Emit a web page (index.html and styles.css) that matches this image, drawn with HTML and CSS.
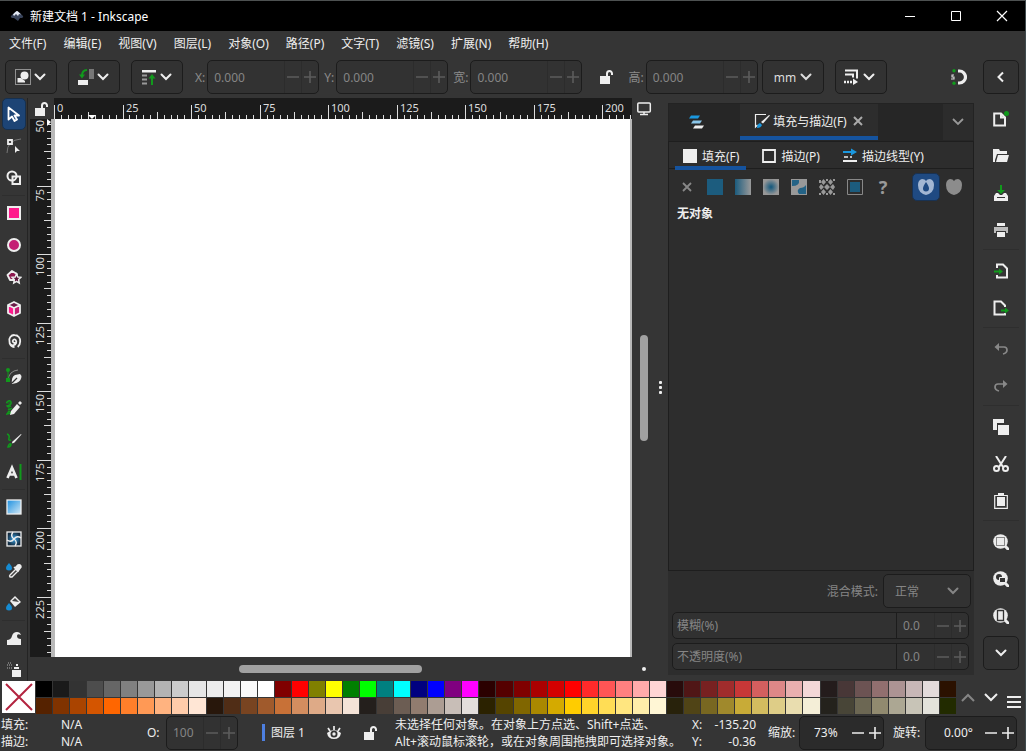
FILE: index.html
```html
<!DOCTYPE html>
<html lang="zh-CN">
<head>
    <meta charset="UTF-8">
    <title>新建文档 1 - Inkscape</title>
    <link rel="stylesheet" href="styles.css">
</head>
<body>

<!-- 公用图标 -->
<svg class="defs" aria-hidden="true">
    <symbol id="down" viewBox="0 0 12 12"><path d="M1.500 3.500L6 8l4.500-4.500" fill="none" stroke="currentColor" stroke-width="2" stroke-linecap="round"/></symbol>
    <symbol id="minus" viewBox="0 0 12 12"><path d="M0 6h12" stroke="currentColor" stroke-width="1.6"/></symbol>
    <symbol id="plus" viewBox="0 0 12 12"><path d="M0 6h12M6 0v12" stroke="currentColor" stroke-width="1.6"/></symbol>
    <symbol id="lock" viewBox="0 0 16 16"><path d="M1 7h10v8H1z" fill="currentColor"/><path d="M8 8V4.500a2.500 2.500 0 0 1 5 0V6" fill="none" stroke="currentColor" stroke-width="2"/></symbol>
    <symbol id="lens" viewBox="0 0 16 16"><circle cx="7.500" cy="7.500" r="7.300" fill="#ececec"/><path d="M12 12l3 3" stroke="#ececec" stroke-width="3" stroke-linecap="round"/></symbol>
</svg>

<div class="window">
    <header class="titlebar">
        <svg class="logo" viewBox="0 0 14 12"><path d="M1 6Q6 1 7 1t6 5q1 2-3 2L8 11 4 8Q0 8 1 6z" fill="#38435a"/><path d="M3 4.500Q6 1 7 1t4 3.500L9 4 8 6 6 4 4 6z" fill="#e4eaf5"/></svg>
        <span class="title">新建文档 1 - Inkscape</span>
        <button class="win-btn" aria-label="最小化"><svg viewBox="0 0 12 12"><path d="M1 6.500h10" stroke="#fff"/></svg></button>
        <button class="win-btn" aria-label="最大化"><svg viewBox="0 0 12 12"><path d="M1.500 1.500h9v9h-9z" stroke="#fff" fill="none"/></svg></button>
        <button class="win-btn" aria-label="关闭"><svg viewBox="0 0 12 12"><path d="M1 1l10 10M11 1L1 11" stroke="#fff" stroke-width="1.200"/></svg></button>
    </header>

    <nav class="menubar">
        <button>文件(F)</button>
        <button>编辑(E)</button>
        <button>视图(V)</button>
        <button>图层(L)</button>
        <button>对象(O)</button>
        <button>路径(P)</button>
        <button>文字(T)</button>
        <button>滤镜(S)</button>
        <button>扩展(N)</button>
        <button>帮助(H)</button>
    </nav>

    <div class="toolbar">
        <button class="drop" aria-label="选择">
            <svg class="icon" viewBox="0 0 16 16"><path d="M.5.500h15v15H.500z" fill="none" stroke="#eee" stroke-dasharray="1 1"/><circle cx="9.500" cy="6.500" r="4" fill="#eee"/><path d="M2.500 9H6l4 3v1.500H2.500z" fill="#eee"/></svg>
            <svg class="arrow"><use href="#down"/></svg>
        </button>
        <button class="drop" aria-label="旋转对象">
            <svg class="icon" viewBox="0 0 16 16"><path d="M11 0h5v10h-5z" fill="#777"/><path d="M0 11h10v5H0z" fill="#eee"/><path d="M9 1Q4 1 4 7" fill="none" stroke="#119a1c" stroke-width="2"/><path d="M1 5.500h6L4 9.500z" fill="#119a1c"/></svg>
            <svg class="arrow"><use href="#down"/></svg>
        </button>
        <button class="drop" aria-label="层叠次序">
            <svg class="icon" viewBox="0 0 16 16"><path d="M1 1h14v2.500H1z" fill="#eee"/><path d="M1 6.500h5M1 10.500h5M1 14.500h5" stroke="#999" stroke-width="2"/><path d="M11 16V8" stroke="#119a1c" stroke-width="2"/><path d="M7.500 9.500L11 5l3.500 4.500z" fill="#119a1c"/></svg>
            <svg class="arrow"><use href="#down"/></svg>
        </button>

        <div class="fields">
            <label for="pos-x">X:</label>
            <span class="spin off"><input id="pos-x" type="text" value="0.000" disabled><button aria-label="减" disabled><svg><use href="#minus"/></svg></button><button aria-label="加" disabled><svg><use href="#plus"/></svg></button></span>
            <label for="pos-y">Y:</label>
            <span class="spin off"><input id="pos-y" type="text" value="0.000" disabled><button aria-label="减" disabled><svg><use href="#minus"/></svg></button><button aria-label="加" disabled><svg><use href="#plus"/></svg></button></span>
            <label for="size-w">宽:</label>
            <span class="spin off"><input id="size-w" type="text" value="0.000" disabled><button aria-label="减" disabled><svg><use href="#minus"/></svg></button><button aria-label="加" disabled><svg><use href="#plus"/></svg></button></span>
            <button class="lock-ratio" aria-label="锁定宽高比"><svg class="icon"><use href="#lock"/></svg></button>
            <label for="size-h">高:</label>
            <span class="spin off"><input id="size-h" type="text" value="0.000" disabled><button aria-label="减" disabled><svg><use href="#minus"/></svg></button><button aria-label="加" disabled><svg><use href="#plus"/></svg></button></span>
            <span class="select unit">
                <select aria-label="单位"><option>mm</option><option>px</option></select>
                <svg class="arrow"><use href="#down"/></svg>
            </span>
        </div>

        <button class="drop" aria-label="变换选项">
            <svg class="icon" viewBox="0 0 16 16"><path d="M1 1.500h12v8M1 5.500h8v3" fill="none" stroke="#eee" stroke-width="2"/><path d="M0 13h9" stroke="#eee" stroke-width="2.500" stroke-dasharray="2 1"/><path d="M9 9.500l5 3.500-5 3z" fill="#eee"/></svg>
            <svg class="arrow"><use href="#down"/></svg>
        </button>

        <button class="plain snap" aria-label="吸附">
            <svg class="icon" viewBox="0 0 16 16"><path d="M7 2h1.500a6 6 0 0 1 0 12H7" fill="none" stroke="#eee" stroke-width="3.200"/><circle cx="3" cy="1.800" r="1.700" fill="#119a1c"/><circle cx="3" cy="14.200" r="1.700" fill="#119a1c"/><path d="M3 6H1v2h2v2H0" fill="none" stroke="#ddd" stroke-width="1.100"/></svg>
        </button>
        <button class="more" aria-label="展开"><svg class="arrow" viewBox="0 0 12 12"><path d="M8 1.500L3.500 6 8 10.500" fill="none" stroke="#eee" stroke-width="2"/></svg></button>
    </div>

    <main class="body">
        <aside class="toolbox">
            <button class="active" aria-label="选择工具"><svg class="icon" viewBox="0 0 16 16"><path d="M2.500 1.500v12l3.500-3 2.500 4.500 2.500-1.500-2.500-4H13z" fill="#1d4475" stroke="#fff" stroke-width="1.800" stroke-linejoin="round"/></svg></button>
            <button aria-label="节点工具"><svg class="icon" viewBox="0 0 16 16"><path d="M1 15Q1 2 15 1" fill="none" stroke="#777"/><path d="M2 2h4v4H2z" fill="#444" stroke="#eee" stroke-width="1.800"/><path d="M9 8v7l2-2h3z" fill="#eee"/></svg></button>
            <button aria-label="形状生成"><svg class="icon" viewBox="0 0 16 16"><circle cx="6" cy="6" r="4.500" fill="none" stroke="#eee" stroke-width="2"/><path d="M6.500 6.500h7.500v7.500H6.500z" fill="none" stroke="#eee" stroke-width="2"/></svg></button>
            <hr>
            <button aria-label="矩形"><svg class="icon" viewBox="0 0 16 16"><rect x="2" y="2" width="12" height="12" fill="#ff1a8c" stroke="#eee" stroke-width="2"/></svg></button>
            <button aria-label="椭圆"><svg class="icon" viewBox="0 0 16 16"><circle cx="8" cy="8" r="6" fill="#c41d74" stroke="#eee" stroke-width="2"/></svg></button>
            <button aria-label="星形"><svg class="icon" viewBox="0 0 16 16"><path d="M6 2l5 3-1 6H4L1.500 6z" fill="#8e174e" stroke="#eee" stroke-width="1.800" stroke-linejoin="round"/><path d="M10.500 5l1.300 3 3.200.300-2.400 2.200.700 3.500-2.800-1.700L7.700 14l.700-3.500L6 8.300 9.200 8z" fill="#5b1539" stroke="#eee" stroke-width="1.400"/></svg></button>
            <button aria-label="立方体"><svg class="icon" viewBox="0 0 16 16"><path d="M8 1l6 3v8l-6 3-6-3V4z" fill="#6b1b47"/><path d="M2 4l6 3v8l-6-3z" fill="#ff1a8c"/><path d="M8 7l6-3v8l-6 3z" fill="#c41d74"/><path d="M8 1l6 3v8l-6 3-6-3V4zM2 4l6 3 6-3M8 7v8" fill="none" stroke="#eee" stroke-width="1.800" stroke-linejoin="round"/></svg></button>
            <button aria-label="螺旋"><svg class="icon" viewBox="0 0 16 16"><path d="M9.500 9.500A1.700 1.700 0 1 1 9.700 7a3.400 3.400 0 1 1-6.200 1.500A5 5 0 0 1 8.500 2a5.800 5.800 0 0 1 5.700 6.500q0 3.500-2.500 5.500M4 11q1.500 3 4.500 3" fill="none" stroke="#eee" stroke-width="1.800"/></svg></button>
            <hr>
            <button aria-label="钢笔"><svg class="icon" viewBox="0 0 16 16"><path d="M2 12Q3 3 12 2" stroke="#888" fill="none"/><circle cx="2" cy="2" r="2" fill="#119a1c"/><path d="M0 10h4v4H0zM1.500 2h1v10h-1z" fill="#119a1c"/><path d="M6 16q-1-7 3-9l5-1 1.500 2q0 5-5 7z" fill="#eee"/><path d="M6 15l5-5" stroke="#333" stroke-width="1.300"/></svg></button>
            <button aria-label="铅笔"><svg class="icon" viewBox="0 0 16 16"><path d="M0 3q4-4 5-1T1 6q1 2 4 0M2 9q2 1 4-1M1 14l2-3 2 2z" stroke="#119a1c" stroke-width="1.400" fill="#119a1c" fill-opacity=".4"/><path d="M5 11l6-7 3 3-6 7-4 1z" fill="#eee"/><path d="M12 3l2-2 2 2-2 2z" fill="#eee"/></svg></button>
            <button aria-label="书法"><svg class="icon" viewBox="0 0 16 16"><path d="M1 2q3 1 2 4t2 2M2 15q1-4 3-3 0 3-3 3z" fill="none" stroke="#119a1c" stroke-width="1.500"/><path d="M6 10l9-8 .5.500-7 8-2 1z" fill="#eee"/></svg></button>
            <button aria-label="文本"><svg class="icon" viewBox="0 0 16 16"><path d="M1.500 14L6 3.500 10.500 14M3 10.500h6" fill="none" stroke="#eee" stroke-width="2.600"/><path d="M14.500 0v16" stroke="#119a1c" stroke-width="2"/></svg></button>
            <hr>
            <button aria-label="渐变"><svg class="icon" viewBox="0 0 16 16"><defs><linearGradient id="sky" x2="1" y2="1"><stop stop-color="#1a8fe0"/><stop offset="1" stop-color="#d4e9f5"/></linearGradient></defs><rect x="1" y="1" width="14" height="14" fill="url(#sky)" stroke="#eee" stroke-width="1.300"/></svg></button>
            <button aria-label="网格渐变"><svg class="icon" viewBox="0 0 16 16"><defs><radialGradient id="mesh"><stop stop-color="#3aa5e8"/><stop offset="1" stop-color="#152c40"/></radialGradient></defs><rect x="1" y="1" width="14" height="14" fill="url(#mesh)" stroke="#eee" stroke-width="1.300"/><path d="M8 8Q4 5 7 1M8 8q3-4 7-1M8 8q4 3 1 7M8 8q-3 4-7 1" fill="none" stroke="#eee" stroke-width="1.400"/></svg></button>
            <button aria-label="取色器"><svg class="icon" viewBox="0 0 16 16"><path d="M3 0q3 3 3 5a3 2.500 0 0 1-6 0q0-2 3-5z" fill="#168bd2"/><path d="M4 14q-1-1 0-2l6-6 2 2-6 6z" fill="#444" stroke="#eee" stroke-width="1.300"/><path d="M8 4l4 4M9 5l3-3q3-1 3 2l-3 4z" fill="#eee" stroke="#eee" stroke-width="1.500"/></svg></button>
            <button aria-label="油漆桶"><svg class="icon" viewBox="0 0 16 16"><path d="M4 6l5-5 6 6-6 5z" fill="#eee"/><path d="M6 6l3-3 4 4z" fill="#444"/><path d="M3 8q3 3 3 5a3 2.500 0 0 1-6 0q0-2 3-5z" fill="#168bd2"/></svg></button>
            <hr>
            <button aria-label="微调"><svg class="icon" viewBox="0 0 16 16"><path d="M1 15v-5q4 0 5-4 1-4 5-4 3 0 4 3-4-2-4 1 0 3 4 3v6z" fill="#eee"/></svg></button>
            <button aria-label="喷绘"><svg class="icon" viewBox="0 0 16 16"><path d="M1 3h6M1 6h5M2 1h3" stroke="#888" stroke-width="1.500" stroke-dasharray="1 1"/><path d="M6 8h9v7H6zM8 5h5v2H8zM10 2h2v2h-2z" fill="#eee"/></svg></button>
        </aside>

        <section class="canvas-area">
            <div class="ruler-row">
                <button class="corner" aria-label="锁定参考线"><svg class="icon"><use href="#lock"/></svg></button>
                <svg class="ruler-h" id="rulerH"></svg>
                <button class="side" aria-label="显示模式"><svg class="icon" viewBox="0 0 16 16"><rect x="1.800" y="2" width="12.500" height="9" rx="1" fill="none" stroke="#eee" stroke-width="1.500"/><path d="M4 13.500h8M8 11v3" stroke="#eee" stroke-width="1.500"/></svg></button>
            </div>
            <div class="view-row">
                <svg class="ruler-v" id="rulerV"></svg>
                <div class="desk"><div class="page"></div></div>
                <div class="scroll-v"><div class="thumb-v"></div></div>
            </div>
            <div class="scroll-row">
                <div class="scroll-h"><div class="thumb-h"></div></div>
                <div class="side"><span class="dot"></span></div>
            </div>
        </section>

        <div class="splitter"><span></span><span></span><span></span></div>

        <section class="dock">
            <div class="dock-tabs">
                <button class="dock-tab" aria-label="图层和对象"><svg class="icon" viewBox="0 0 16 16"><path d="M3 1.500h9l-2 3H1z" fill="#1a98df"/><path d="M5 6.500h9l-2 3H3z" fill="#8bc7ea"/><path d="M7 11.500h9l-2 3H5z" fill="#eee"/></svg></button>
                <button class="dock-tab current"><svg class="icon" viewBox="0 0 16 16"><path d="M12 1.500H1.500v12.500l2-2" fill="none" stroke="#eee" stroke-width="1.200"/><path d="M7 9l8-7 1 .5-7 8z" fill="#eee"/><path d="M3 15q0-4 3-5l2 2q-1 3-5 3z" fill="#1a98df"/></svg><span>填充与描边(F)</span><svg class="close" viewBox="0 0 12 12"><path d="M2 2l8 8M10 2l-8 8" stroke="#aaa" stroke-width="2"/></svg></button>
                <button class="dock-menu" aria-label="对话框菜单"><svg viewBox="0 0 14 14"><path d="M2 4l5 5 5-5" fill="none" stroke="#999" stroke-width="1.800"/></svg></button>
            </div>
            <div class="dialog">
                <div class="subtabs">
                    <button class="current"><svg class="icon" viewBox="0 0 16 16"><path d="M1 1h14v14H1z" fill="#eee"/></svg>填充(F)</button>
                    <button><svg class="icon" viewBox="0 0 16 16"><path d="M2 2h12v12H2z" fill="none" stroke="#eee" stroke-width="1.800"/></svg>描边(P)</button>
                    <button><svg class="icon" viewBox="0 0 16 16"><path d="M1 4h9" stroke="#1a98df" stroke-width="2"/><path d="M9 .5l6 3.500-6 3.500z" fill="#1a98df"/><path d="M2 9h4M8 9h2" stroke="#eee" stroke-width="1.500"/><path d="M1 13h14" stroke="#eee" stroke-width="2"/></svg>描边线型(Y)</button>
                </div>
                <div class="paints">
                    <button aria-label="无填充"><svg class="icon" viewBox="0 0 16 16"><path d="M4 4l8 8M12 4l-8 8" stroke="#888" stroke-width="1.800"/></svg></button>
                    <button aria-label="均匀颜色"><svg class="icon" viewBox="0 0 16 16"><path d="M0 0h16v16H0z" fill="#1c5c7e"/></svg></button>
                    <button aria-label="线性渐变"><svg class="icon" viewBox="0 0 16 16"><defs><linearGradient id="lin"><stop stop-color="#1c5c7e"/><stop offset="1" stop-color="#9a9a9a"/></linearGradient></defs><path d="M0 0h16v16H0z" fill="url(#lin)"/></svg></button>
                    <button aria-label="径向渐变"><svg class="icon" viewBox="0 0 16 16"><defs><radialGradient id="rad"><stop offset=".1" stop-color="#1c5c7e"/><stop offset="1" stop-color="#979797"/></radialGradient></defs><path d="M0 0h16v16H0z" fill="url(#rad)"/></svg></button>
                    <button aria-label="网格"><svg class="icon" viewBox="0 0 16 16"><path d="M0 0h16v16H0z" fill="#999"/><path d="M1 1h7q1 6-7 6z" fill="#246386"/><path d="M15 15H8q-3-4 1-6 4 0 6-3z" fill="#246386"/></svg></button>
                    <button aria-label="图案"><svg class="icon" viewBox="0 0 16 16"><path d="M0 1h2v3H0zM4.500 0l2.500 3-2.500 3L2 3zM11.500 0L14 3l-2.500 3L9 3zM2 5l3 3-3 3-2-3zM8 5l3 3-3 3-3-3zM14 5l2 3-2 3-3-3zM4.500 10L7 13l-2.500 3L2 13zM11.500 10l2.500 3-2.500 3L9 13zM7 0h2v2H7zM14 0h2v2h-2zM7 14h2v2H7zM14 14h2v2h-2zM0 14h2v2H0z" fill="#999"/></svg></button>
                    <button aria-label="色板"><svg class="icon" viewBox="0 0 16 16"><path d="M.500.500h15v15H.500z" fill="none" stroke="#888"/><path d="M3 3h10v10H3z" fill="#1c5c7e"/></svg></button>
                    <button class="unknown" aria-label="未定义">?</button>
                    <button class="rule on" aria-label="奇偶填充"><svg class="icon" viewBox="0 0 16 16"><path fill-rule="evenodd" d="M4 0q3 0 4 2 1-2 4-2 4 1 4 6 0 8-8 10Q0 14 0 6q0-5 4-6zM8 3Q5 7 5 9.500a3 3 0 0 0 6 0Q11 7 8 3z" fill="#a3b7d3"/></svg></button>
                    <button class="rule" aria-label="非零填充"><svg class="icon" viewBox="0 0 16 16"><path d="M4 0q3 0 4 2 1-2 4-2 4 1 4 6 0 8-8 10Q0 14 0 6q0-5 4-6z" fill="#8c8c8c"/></svg></button>
                </div>
                <p class="empty">无对象</p>
            </div>
            <div class="object-props">
                <div class="blend">
                    <label for="blend">混合模式:</label>
                    <span class="select">
                        <select id="blend" disabled><option>正常</option></select>
                        <svg class="arrow"><use href="#down"/></svg>
                    </span>
                </div>
                <div class="spin off slider"><label for="blur">模糊(%)</label><input id="blur" type="text" value="0.0" disabled><button aria-label="减" disabled><svg><use href="#minus"/></svg></button><button aria-label="加" disabled><svg><use href="#plus"/></svg></button></div>
                <div class="spin off slider"><label for="opacity">不透明度(%)</label><input id="opacity" type="text" value="0.0" disabled><button aria-label="减" disabled><svg><use href="#minus"/></svg></button><button aria-label="加" disabled><svg><use href="#plus"/></svg></button></div>
            </div>
        </section>

        <aside class="commands">
            <button aria-label="新建"><svg class="icon" viewBox="0 0 16 16"><path d="M1.200 2.500H8l4 4v8H1.200zM8 2.500v4h4" fill="none" stroke="#eee" stroke-width="2"/><circle cx="13.500" cy="2.500" r="2.500" fill="#119a1c"/></svg></button>
            <button aria-label="打开"><svg class="icon" viewBox="0 0 16 16"><path d="M0 1h6l1 2h7v3H4l-2 6v2H0z" fill="#eee"/><path d="M5 7h11l-2 7H3z" fill="#eee"/></svg></button>
            <button aria-label="保存"><svg class="icon" viewBox="0 0 16 16"><path d="M8 0v6" stroke="#119a1c" stroke-width="2"/><path d="M4 5h8L8 9z" fill="#119a1c"/><path d="M3 8h2l2 2h2l2-2h2l2 3v5H1v-5z" fill="#eee"/><path d="M4 12.500h8" stroke="#333"/></svg></button>
            <button aria-label="打印"><svg class="icon" viewBox="0 0 16 16"><path d="M4 1h8v3H4z" fill="#eee"/><path d="M1 5h14v6h-2V9H3v2H1z" fill="#bbb"/><path d="M4 10h8v5H4z" fill="#eee"/></svg></button>
            <hr>
            <button aria-label="导入"><svg class="icon" viewBox="0 0 16 16"><path d="M4 5V1.500h6l4 4v9H4V12" fill="none" stroke="#eee" stroke-width="2"/><path d="M1 8.500h6" stroke="#119a1c" stroke-width="2"/><path d="M6 5.500l4 3-4 3z" fill="#119a1c"/></svg></button>
            <button aria-label="导出"><svg class="icon" viewBox="0 0 16 16"><path d="M12 7V5.500l-4-4H1.500v13H12V13" fill="none" stroke="#eee" stroke-width="2"/><path d="M8 10.500h5" stroke="#119a1c" stroke-width="2"/><path d="M12 7.500l4 3-4 3z" fill="#119a1c"/></svg></button>
            <hr>
            <button aria-label="撤销"><svg class="icon" viewBox="0 0 16 16"><path d="M3 6h8q3 0 3 3t-4 4" fill="none" stroke="#888" stroke-width="1.700"/><path d="M6 2L1.500 6 6 10" fill="#888"/></svg></button>
            <button aria-label="重做"><svg class="icon" viewBox="0 0 16 16"><path d="M13 6H5Q2 6 2 9t4 4" fill="none" stroke="#888" stroke-width="1.700"/><path d="M10 2l4.500 4-4.500 4" fill="#888"/></svg></button>
            <hr>
            <button aria-label="复制"><svg class="icon" viewBox="0 0 16 16"><path d="M0 0h11v4H4v7H0zM5 6h11v10H5z" fill="#eee"/></svg></button>
            <button aria-label="剪切"><svg class="icon" viewBox="0 0 16 16"><path d="M3 0l7 11M13 0L6 11" stroke="#eee" stroke-width="2"/><circle cx="3.500" cy="12.500" r="2.500" fill="none" stroke="#eee" stroke-width="2"/><circle cx="12.500" cy="12.500" r="2.500" fill="none" stroke="#eee" stroke-width="2"/></svg></button>
            <button aria-label="粘贴"><svg class="icon" viewBox="0 0 16 16"><path d="M1.700 2.500h12.600v12.800H1.700z" fill="none" stroke="#eee" stroke-width="1.200"/><path d="M4 4h8v9H4zM5 0h6v3H5z" fill="#eee"/></svg></button>
            <hr>
            <button aria-label="缩放到选区"><svg class="icon" viewBox="0 0 16 16"><use href="#lens"/><path d="M3.500 3.500h8v8h-8z" fill="none" stroke="#222" stroke-dasharray="1 1"/></svg></button>
            <button aria-label="缩放到绘图"><svg class="icon" viewBox="0 0 16 16"><use href="#lens"/><circle cx="6" cy="6" r="3" fill="#333"/><path d="M6.500 6.500h6v5h-6z" fill="#333" stroke="#eee"/></svg></button>
            <button aria-label="缩放到页面"><svg class="icon" viewBox="0 0 16 16"><use href="#lens"/><path d="M4.500 2.500h6v10h-6z" fill="none" stroke="#333" stroke-width="1.300"/></svg></button>
            <button class="more" aria-label="更多"><svg class="arrow"><use href="#down"/></svg></button>
        </aside>
    </main>

    <div class="palette">
        <button class="none" aria-label="无颜色"><svg viewBox="0 0 32 32"><path d="M3 3l26 26M29 3L3 29" stroke="#b3243f" stroke-width="2"/></svg></button>
        <div class="swatches" id="swatches"></div>
        <div class="palette-nav">
            <button class="dim" aria-label="上一行"><svg viewBox="0 0 14 14"><path d="M1 10l6-6 6 6" fill="none" stroke="currentColor" stroke-width="2"/></svg></button>
            <button aria-label="下一行"><svg viewBox="0 0 14 14"><path d="M1 3l6 6 6-6" fill="none" stroke="currentColor" stroke-width="2"/></svg></button>
            <button class="burger" aria-label="调色板菜单"><svg viewBox="0 0 14 14"><path d="M0 2h14M0 7h14M0 12h14" stroke="currentColor" stroke-width="2"/></svg></button>
        </div>
    </div>

    <footer class="status">
        <dl class="style-info">
            <dt>填充:</dt><dd>N/A</dd>
            <dt>描边:</dt><dd>N/A</dd>
        </dl>
        <div class="group opacity">
            <label for="master-opacity">O:</label>
            <span class="spin off"><input id="master-opacity" type="text" value="100" disabled><button aria-label="减" disabled><svg><use href="#minus"/></svg></button><button aria-label="加" disabled><svg><use href="#plus"/></svg></button></span>
        </div>
        <button class="layer"><i></i>图层 1</button>
        <button class="layer-btn" aria-label="显示图层"><svg class="icon" viewBox="0 0 16 16"><path d="M1 8q1 6 7 6t7-6q-7-6-14 0z" fill="#eee"/><circle cx="8" cy="9" r="3.500" fill="#333"/><circle cx="8" cy="9" r="1.700" fill="#eee"/><path d="M8 5V1M4 6L2 3M12 6l2-3" stroke="#eee" stroke-width="1.700"/></svg></button>
        <button class="layer-btn" aria-label="锁定图层"><svg class="icon"><use href="#lock"/></svg></button>
        <p class="message">未选择任何对象。在对象上方点选、Shift+点选、<br>Alt+滚动鼠标滚轮，或在对象周围拖拽即可选择对象。</p>
        <dl class="coords">
            <dt>X:</dt><dd>-135.20</dd>
            <dt>Y:</dt><dd>-0.36</dd>
        </dl>
        <div class="group zoom">
            <label for="zoom">缩放:</label>
            <span class="spin"><input id="zoom" type="text" value="73%"><button aria-label="缩小"><svg><use href="#minus"/></svg></button><button aria-label="放大"><svg><use href="#plus"/></svg></button></span>
        </div>
        <div class="group rotate">
            <label for="rotate">旋转:</label>
            <span class="spin"><input id="rotate" type="text" value="0.00°"><button aria-label="逆时针"><svg><use href="#minus"/></svg></button><button aria-label="顺时针"><svg><use href="#plus"/></svg></button></span>
        </div>
    </footer>
</div>

<script src="script.js"></script>
</body>
</html>
```
FILE: styles.css
```css
* {
    box-sizing: border-box;
}
body {
    margin: 0;
    background-color: #353535;
    color: #eee;
    font: 12px/17px "Noto Sans", "Noto Sans CJK SC", sans-serif;
}
button, input, select {
    margin: 0;
    padding: 0;
    border: 0;
    background: none;
    color: inherit;
    font: inherit;
}
button {
    display: flex;
    align-items: center;
    justify-content: center;
    flex: none;
}
p, dl, dd {
    margin: 0;
}
svg {
    display: block;
    flex: none;
}
.defs {
    position: absolute;
    width: 0;
    height: 0;
}
.icon {
    width: 16px;
    height: 16px;
}
.arrow {
    width: 12px;
    height: 12px;
}
.window {
    display: flex;
    flex-direction: column;
    height: 100vh;
    overflow: hidden;
    border-top: 1px solid #4d5151;
    border-right: 1px solid #3f4a4d;
}

/* 标题栏 */
.titlebar {
    display: flex;
    align-items: center;
    height: 30px;
    padding-left: 10px;
    background-color: #000;
    color: #fff;
}
.logo {
    width: 14px;
    height: 12px;
}
.title {
    flex: 1;
    margin-left: 6px;
}
.win-btn {
    width: 46px;
    height: 30px;
}
.win-btn svg {
    width: 12px;
    height: 12px;
}

/* 菜单 */
.menubar {
    display: flex;
    gap: 1px;
    height: 25px;
    padding-left: 1px;
}
.menubar button {
    padding: 0 8px;
}

/* 工具控制栏 */
.toolbar {
    display: flex;
    align-items: center;
    gap: 11px;
    height: 42px;
    padding: 0 6px 0 5px;
}
.drop, .more, .select, .spin {
    height: 34px;
    border: 1px solid #1c1c1c;
    border-radius: 5px;
    background-color: #323232;
}
.drop {
    width: 52px;
    gap: 3px;
    padding-right: 2px;
}
.more {
    width: 36px;
}
.fields {
    display: flex;
    align-items: center;
    color: #8b8b8b;
}
.fields label {
    padding: 0 2px 0 1px;
}
.fields .spin {
    width: 112px;
    margin-right: 4px;
}
.spin {
    display: flex;
    overflow: hidden;
    background-color: #2b2b2b;
}
.spin.off {
    background-color: #323232;
    color: #858585;
}
.spin input {
    flex: 1;
    width: 0;
    min-width: 0;
    padding-left: 6px;
}
.spin button {
    width: 17px;
}
.spin.off button {
    border-left: 1px solid #2c2c2c;
    color: #5c5c5c;
}
.spin svg {
    width: 12px;
    height: 12px;
}
.lock-ratio {
    width: 41px;
    color: #eee;
}
.select {
    display: grid;
    align-items: center;
}
.select select {
    grid-area: 1 / 1;
    width: 100%;
    height: 100%;
    padding-left: 11px;
    appearance: none;
    opacity: 1;
}
.select .arrow {
    grid-area: 1 / 1;
    justify-self: end;
    margin-right: 11px;
    pointer-events: none;
}
.unit {
    width: 62px;
    color: #ddd;
}
.snap {
    margin-left: auto;
    margin-right: 5px;
}

/* 主体 */
.body {
    display: flex;
    flex: 1;
    min-height: 0;
}
.toolbox {
    width: 28px;
    overflow: hidden;
    border-right: 1px solid #242424;
}
.toolbox button {
    width: 24px;
    height: 32px;
    margin-left: 2px;
    border-radius: 5px;
}
.toolbox .active {
    background-color: #1d4475;
    border: 1px solid #16304f;
}
.toolbox hr, .commands hr {
    margin: 1px 2px;
    border: 0;
    height: 1px;
    background-color: #2e2e2e;
}
.canvas-area {
    display: flex;
    flex-direction: column;
    flex: 1;
    min-width: 0;
    padding-left: 2px;
}
.ruler-row, .view-row, .scroll-row {
    display: flex;
}
.ruler-row {
    height: 21px;
}
.view-row {
    flex: 1;
    min-height: 0;
}
.scroll-row {
    height: 24px;
}
.corner {
    width: 24px;
}
.ruler-h, .ruler-v {
    background-color: #1b1b1b;
    fill: #ddd;
    stroke: none;
    font-size: 11px;
}
.ruler-h {
    flex: 1;
    min-width: 0;
    height: 21px;
}
.ruler-v {
    width: 21px;
    height: 100%;
}
.side, .scroll-v {
    display: flex;
    align-items: center;
    justify-content: center;
    width: 24px;
}
.desk {
    flex: 1;
    padding: 0 2px 0 4px;
    background-color: #b9b9b9;
}
.page {
    height: 100%;
    background-color: #fff;
}
.thumb-v {
    width: 8px;
    height: 106px;
    border-radius: 4px;
    background-color: #a1a1a1;
}
.scroll-h {
    display: flex;
    align-items: center;
    flex: 1;
    padding-left: 209px;
}
.thumb-h {
    width: 183px;
    height: 8px;
    border-radius: 4px;
    background-color: #a1a1a1;
}
.dot {
    width: 4px;
    height: 4px;
    border-radius: 2px;
    background-color: #eee;
}
.splitter {
    display: flex;
    flex-direction: column;
    align-items: center;
    justify-content: center;
    gap: 2px;
    width: 12px;
    padding: 0 3px 4px 0;
}
.splitter span {
    width: 3px;
    height: 3px;
    border-radius: 1px;
    background-color: #eee;
}

/* 停靠面板 */
.dock {
    display: flex;
    flex-direction: column;
    width: 306px;
    margin: 5px 0 6px;
    background-color: #2d2d2d;
}
.dock-tabs {
    display: flex;
    height: 38px;
    padding-bottom: 1px;
    border: 1px solid #232323;
    border-bottom: 0;
    background-color: #262626;
}
.dock-tab {
    width: 71px;
    padding-right: 18px;
}
.dock-tab.current {
    width: 138px;
    padding: 2px 0 0;
    gap: 3px;
    border-bottom: 4px solid #15539e;
    background-color: #2d2d2d;
}
.close {
    width: 12px;
    height: 12px;
    margin-left: 2px;
}
.dock-menu {
    width: 30px;
    margin-left: auto;
    background-color: #2c2c2c;
}
.dock-menu svg {
    width: 14px;
    height: 14px;
}
.dialog {
    flex: 1;
    border: 1px solid #1e1e1e;
}
.subtabs {
    display: flex;
    gap: 8px;
    height: 27px;
    padding-left: 6px;
    border-bottom: 1px solid #1e1e1e;
}
.subtabs button {
    gap: 4px;
    height: 28px;
    padding: 4px 7px 0;
    border-bottom: 4px solid transparent;
}
.subtabs .current {
    border-bottom-color: #15539e;
}
.paints {
    display: flex;
    align-items: center;
    height: 36px;
    padding-left: 4px;
}
.paints button {
    width: 28px;
    height: 28px;
}
.paints .unknown {
    color: #999;
    font-size: 18px;
    font-weight: bold;
}
.paints .rule.on {
    margin-left: 15px;
    border: 1px solid #193252;
    border-radius: 5px;
    background-color: #1f4a82;
}
.empty {
    padding-left: 8px;
    font-weight: bold;
}
.object-props {
    display: flex;
    flex-direction: column;
    gap: 4px;
    padding: 3px 5px 5px 4px;
    color: #858585;
}
.blend {
    display: flex;
    align-items: center;
    justify-content: flex-end;
    gap: 5px;
    margin-right: -2px;
}
.blend .select {
    width: 88px;
}
.spin.slider {
    height: 27px;
    background-color: #313131;
}
.slider label {
    flex: 1;
    padding: 4px;
}
.slider input {
    flex: none;
    width: 38px;
    border-left: 1px solid #1c1c1c;
}

/* 命令栏 */
.commands {
    width: 51px;
    padding: 2px 6px 0 9px;
}
.commands button {
    width: 36px;
    height: 37px;
}
.commands .more {
    height: 34px;
    margin-top: 2px;
}
.commands hr {
    margin: 1px 0 2px;
}

/* 调色板 */
.palette {
    display: flex;
    height: 33px;
    padding-left: 2px;
}
.none {
    width: 33px;
    height: 32px;
    background-color: #fff;
}
.none svg {
    width: 32px;
    height: 32px;
}
.swatches {
    display: grid;
    grid-template-columns: repeat(54, 1fr);
    gap: 1px;
    flex: 1;
    height: 33px;
    margin-left: 1px;
}
.palette-nav {
    display: flex;
    align-items: center;
    gap: 9px;
    padding: 0 4px 0 5px;
}
.palette-nav svg {
    width: 14px;
    height: 14px;
}
.palette-nav .dim {
    color: #858585;
}
.burger {
    padding-top: 8px;
}

/* 状态栏 */
.status {
    display: flex;
    align-items: center;
    height: 37px;
    padding: 0 8px 0 1px;
}
.style-info, .coords {
    display: grid;
}
.style-info {
    grid-template-columns: 60px 86px;
}
.coords {
    grid-template-columns: 16px 48px;
    margin-left: auto;
}
.coords dd {
    text-align: right;
}
.group {
    display: flex;
    align-items: center;
    justify-content: space-between;
}
.opacity {
    width: 91px;
}
.zoom {
    width: 116px;
    margin-left: 12px;
}
.rotate {
    width: 124px;
    margin-left: 9px;
}
.opacity .spin {
    width: 72px;
}
.zoom .spin {
    width: 85px;
}
.rotate .spin {
    width: 92px;
}
.zoom input {
    padding-left: 14px;
}
.rotate input {
    padding-left: 18px;
}
.layer {
    gap: 6px;
    margin: 0 11px 0 24px;
}
.layer i {
    width: 3px;
    height: 17px;
    background-color: #4d7fe0;
}
.layer-btn {
    width: 37px;
    height: 34px;
}
.message {
    margin-left: 5px;
    white-space: nowrap;
}
```
FILE: script.js
```js
// 调色板颜色
const rows = [
    '000000 1a1a1a 333333 4d4d4d 666666 808080 999999 b3b3b3 cccccc e6e6e6 ececec f2f2f2 f9f9f9 ffffff ' +
    '800000 ff0000 808000 ffff00 008000 00ff00 008080 00ffff 000080 0000ff 800080 ff00ff ' +
    '2b0000 550000 800000 aa0000 d40000 ff0000 ff2a2a ff5555 ff8080 ffaaaa ffd5d5 ' +
    '280b0b 501616 782121 a02c2c c83737 d35f5f de8787 e9afaf f4d7d7 ' +
    '241c1c 483737 6c5353 916f6f ac9393 c8b7b7 e3dbdb 2b1100',
    '552200 803300 aa4400 d45500 ff6600 ff7f2a ff9955 ffb380 ffccaa ffe6d5 ' +
    '28170b 502d16 784421 a05a2c c87137 d38d5f deaa87 e9c6af f4e3d7 ' +
    '241f1c 483e37 6c5d53 917c6f ac9d93 c8beb7 e3dedb ' +
    '2b2200 554400 806600 aa8800 d4aa00 ffcc00 ffd42a ffdd55 ffe680 ffeeaa fff6d5 ' +
    '28220b 504416 786721 a0892c c8ab37 d3bc5f decd87 e9ddaf f4eed7 ' +
    '24221c 484537 6c6753 918a6f aca793 c8c4b7 e3e2db 222b00'
];
let swatchHTML = '';
rows.join(' ').split(' ').forEach(function(color) {
    swatchHTML += `<span style="background-color:#${color}"></span>`;
});
document.getElementById('swatches').innerHTML = swatchHTML;

// 标尺: 每 2.5mm 一个刻度, 每 25mm 一个数字
const step = 6.855;
const rulerH = document.getElementById('rulerH');
const rulerV = document.getElementById('rulerV');

function tickLength(i) {
    if (i % 10 === 0) return 14;
    return i % 5 === 0 ? 7 : 4;
}

function drawRulers() {
    const width = rulerH.getBoundingClientRect().width;
    const height = rulerV.getBoundingClientRect().height;

    let h = '';
    for (let i = 0; i * step < width; i++) {
        const x = Math.round(i * step);
        const len = tickLength(i);
        h += `<rect x="${x}" y="${21 - len}" width="1" height="${len}"/>`;
        // 放不下的数字不画
        if (i % 10 === 0 && x + 24 < width) {
            h += `<text x="${x + 3}" y="14">${i * 2.5}</text>`;
        }
    }
    h += '<path d="M34 17h8l-4 4z" fill="#fff"/>';
    rulerH.innerHTML = h;

    let v = '';
    for (let i = 20; (i - 20) * step - 2 < height; i++) {
        const y = Math.round((i - 20) * step - 2);
        const len = tickLength(i);
        v += `<rect x="${21 - len}" y="${y}" width="${len}" height="1"/>`;
        if (i % 10 === 0 && y + 24 < height) {
            v += `<text transform="translate(14 ${y + 3}) rotate(-90)" text-anchor="end">${i * 2.5}</text>`;
        }
    }
    v += '<path d="M17 0v7l4-4z" fill="#fff"/>';
    rulerV.innerHTML = v;
}

drawRulers();
window.addEventListener('resize', drawRulers);
```
